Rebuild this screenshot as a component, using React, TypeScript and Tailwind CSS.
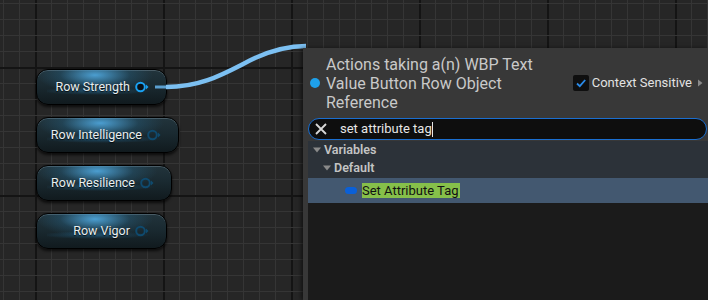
import React from "react";

const vLines = Array.from({ length: 45 }, (_, i) => 3 + i * 16);
const hLines = Array.from({ length: 20 }, (_, i) => 3 + i * 16);

function Grid() {
  return (
    <svg className="absolute inset-0" width="708" height="300">
      {vLines.map((x) => (
        <rect key={"v" + x} x={x} y={0} width={(x - 35) % 128 === 0 ? 2 : 1} height={300} fill={(x - 35) % 128 === 0 ? "#141414" : "#353535"} />
      ))}
      {hLines.map((y) => (
        <rect key={"h" + y} x={0} y={y} width={708} height={(y - 67) % 128 === 0 ? 2 : 1} fill={(y - 67) % 128 === 0 ? "#141414" : "#353535"} />
      ))}
    </svg>
  );
}

function Pin({ active }: { active?: boolean }) {
  const c = active ? "#1aa0f0" : "#0f4a6e";
  return (
    <svg width="14" height="12" viewBox="0 0 14 12" className="shrink-0">
      <circle cx="5.5" cy="6" r="4.3" fill={active ? "#0a0f14" : "none"} stroke={c} strokeWidth="2" />
      <path d="M11 3.5 L13.5 6 L11 8.5 Z" fill={c} />
    </svg>
  );
}

function Node({ label, top, width, active }: { label: string; top: string; width: string; active?: boolean }) {
  return (
    <div className={`absolute left-[36px] ${top} ${width} h-[36px] rounded-[12px] border border-black bg-[linear-gradient(180deg,#22343c_0%,#1a2a31_45%,#111a1e_100%)] shadow-[0_2px_3px_rgba(0,0,0,0.7),inset_0_1px_0_rgba(150,170,180,0.35)] overflow-hidden`}>
      <div className="absolute inset-0 bg-[radial-gradient(ellipse_45%_55%_at_45%_15%,rgba(80,170,225,0.9),rgba(40,110,150,0.3)_60%,transparent_100%)]" />
      <div className="absolute left-[10px] right-[10px] top-[17px] h-[8px] bg-[radial-gradient(ellipse_50%_50%_at_45%_50%,rgba(40,120,170,0.45),transparent)]" />
      <div className="relative flex h-full items-center justify-end gap-[5px] pr-[17px]">
        <span className="font-['Roboto'] text-[12.5px] text-[#e8eef0] [text-shadow:0_1px_1px_rgba(0,0,0,0.8)]">{label}</span>
        <Pin active={active} />
      </div>
    </div>
  );
}

export default function App() {
  return (
    <div className="relative w-[708px] h-[300px] overflow-hidden bg-[#262626] font-['Roboto',sans-serif]">
      <Grid />
      <Node label="Row Strength" top="top-[69px]" width="w-[131px]" active />
      <Node label="Row Intelligence" top="top-[117px]" width="w-[143px]" />
      <Node label="Row Resilience" top="top-[165px]" width="w-[136px]" />
      <Node label="Row Vigor" top="top-[213px]" width="w-[131px]" />
      <svg className="absolute inset-0" width="708" height="300">
        <path d="M155 87 L166 87" fill="none" stroke="#5a9fd0" strokeWidth="3" />
        <path d="M166 87 C 205 87, 228 71, 255 58 C 275 49, 290 46, 306 46" fill="none" stroke="#7cc0f2" strokeWidth="4.5" strokeLinecap="butt" />
      </svg>

      <div className="absolute left-[303px] top-[48px] right-0 bottom-0 flex flex-col bg-[#383838] shadow-[-2px_0_4px_rgba(0,0,0,0.5)]">
        <div className="flex items-center h-[70px] pl-[7px] pr-[3px]">
          <div className="w-[10px] h-[10px] rounded-full bg-[#1ea0ea] shrink-0" />
          <div className="ml-[6px] w-[232px] text-[16px] leading-[19px] text-[#c9c9c9]">
            Actions taking a(n) WBP Text Value Button Row Object Reference
          </div>
          <div className="ml-auto flex items-center">
            <div className="w-[16px] h-[16px] rounded-[2px] bg-[#0f0f0f] flex items-center justify-center">
              <svg width="12" height="12" viewBox="0 0 12 12">
                <path d="M2 6.5 L4.8 9.2 L10.2 3" fill="none" stroke="#2a8ae8" strokeWidth="1.8" />
              </svg>
            </div>
            <span className="ml-[3px] text-[13px] text-[#e2e2e2]">Context Sensitive</span>
            <svg width="10" height="10" viewBox="0 0 10 10" className="ml-[3px]">
              <path d="M3 1.5 L7.5 5 L3 8.5 Z" fill="#8a8a8a" />
            </svg>
          </div>
        </div>
        <div className="ml-[5px] mr-[1px] h-[22px] rounded-full border-[1.5px] border-[#1a6ed0] bg-[#0e0e0e] flex items-center">
          <svg width="14" height="14" viewBox="0 0 14 14" className="ml-[5px]">
            <path d="M2 2 L12 12 M12 2 L2 12" stroke="#d8d8d8" strokeWidth="1.8" />
          </svg>
          <span className="ml-[12px] text-[13px] text-[#e6e6e6]">set attribute tag</span>
          <span className="w-px h-[15px] bg-[#e6e6e6]" />
        </div>
        <div className="ml-[5px] mt-[1px] flex-1 flex flex-col bg-[#1b1b1b]">
          <div className="bg-[#2c3239] pb-[1px]">
            <div className="h-[18px] flex items-center pl-[4px]">
              <svg width="10" height="8" viewBox="0 0 10 8"><path d="M1 1.5 L9 1.5 L5 6.5 Z" fill="#8a8a8a" /></svg>
              <span className="ml-[2px] text-[12.5px] font-semibold text-[#c4c4c4]">Variables</span>
            </div>
            <div className="h-[18px] flex items-center pl-[14px]">
              <svg width="10" height="8" viewBox="0 0 10 8"><path d="M1 1.5 L9 1.5 L5 6.5 Z" fill="#8a8a8a" /></svg>
              <span className="ml-[2px] text-[12.5px] font-semibold text-[#c4c4c4]">Default</span>
            </div>
          </div>
          <div className="h-[25px] bg-[#435870] flex items-center pl-[37px]">
            <div className="w-[12px] h-[7px] rounded-full bg-[#0a60d8]" />
            <span className="ml-[5px] bg-[#86c04a] text-[13px] leading-[15px] text-[#111] pr-[1px]">Set Attribute Tag</span>
          </div>
        </div>
      </div>
    </div>
  );
}
